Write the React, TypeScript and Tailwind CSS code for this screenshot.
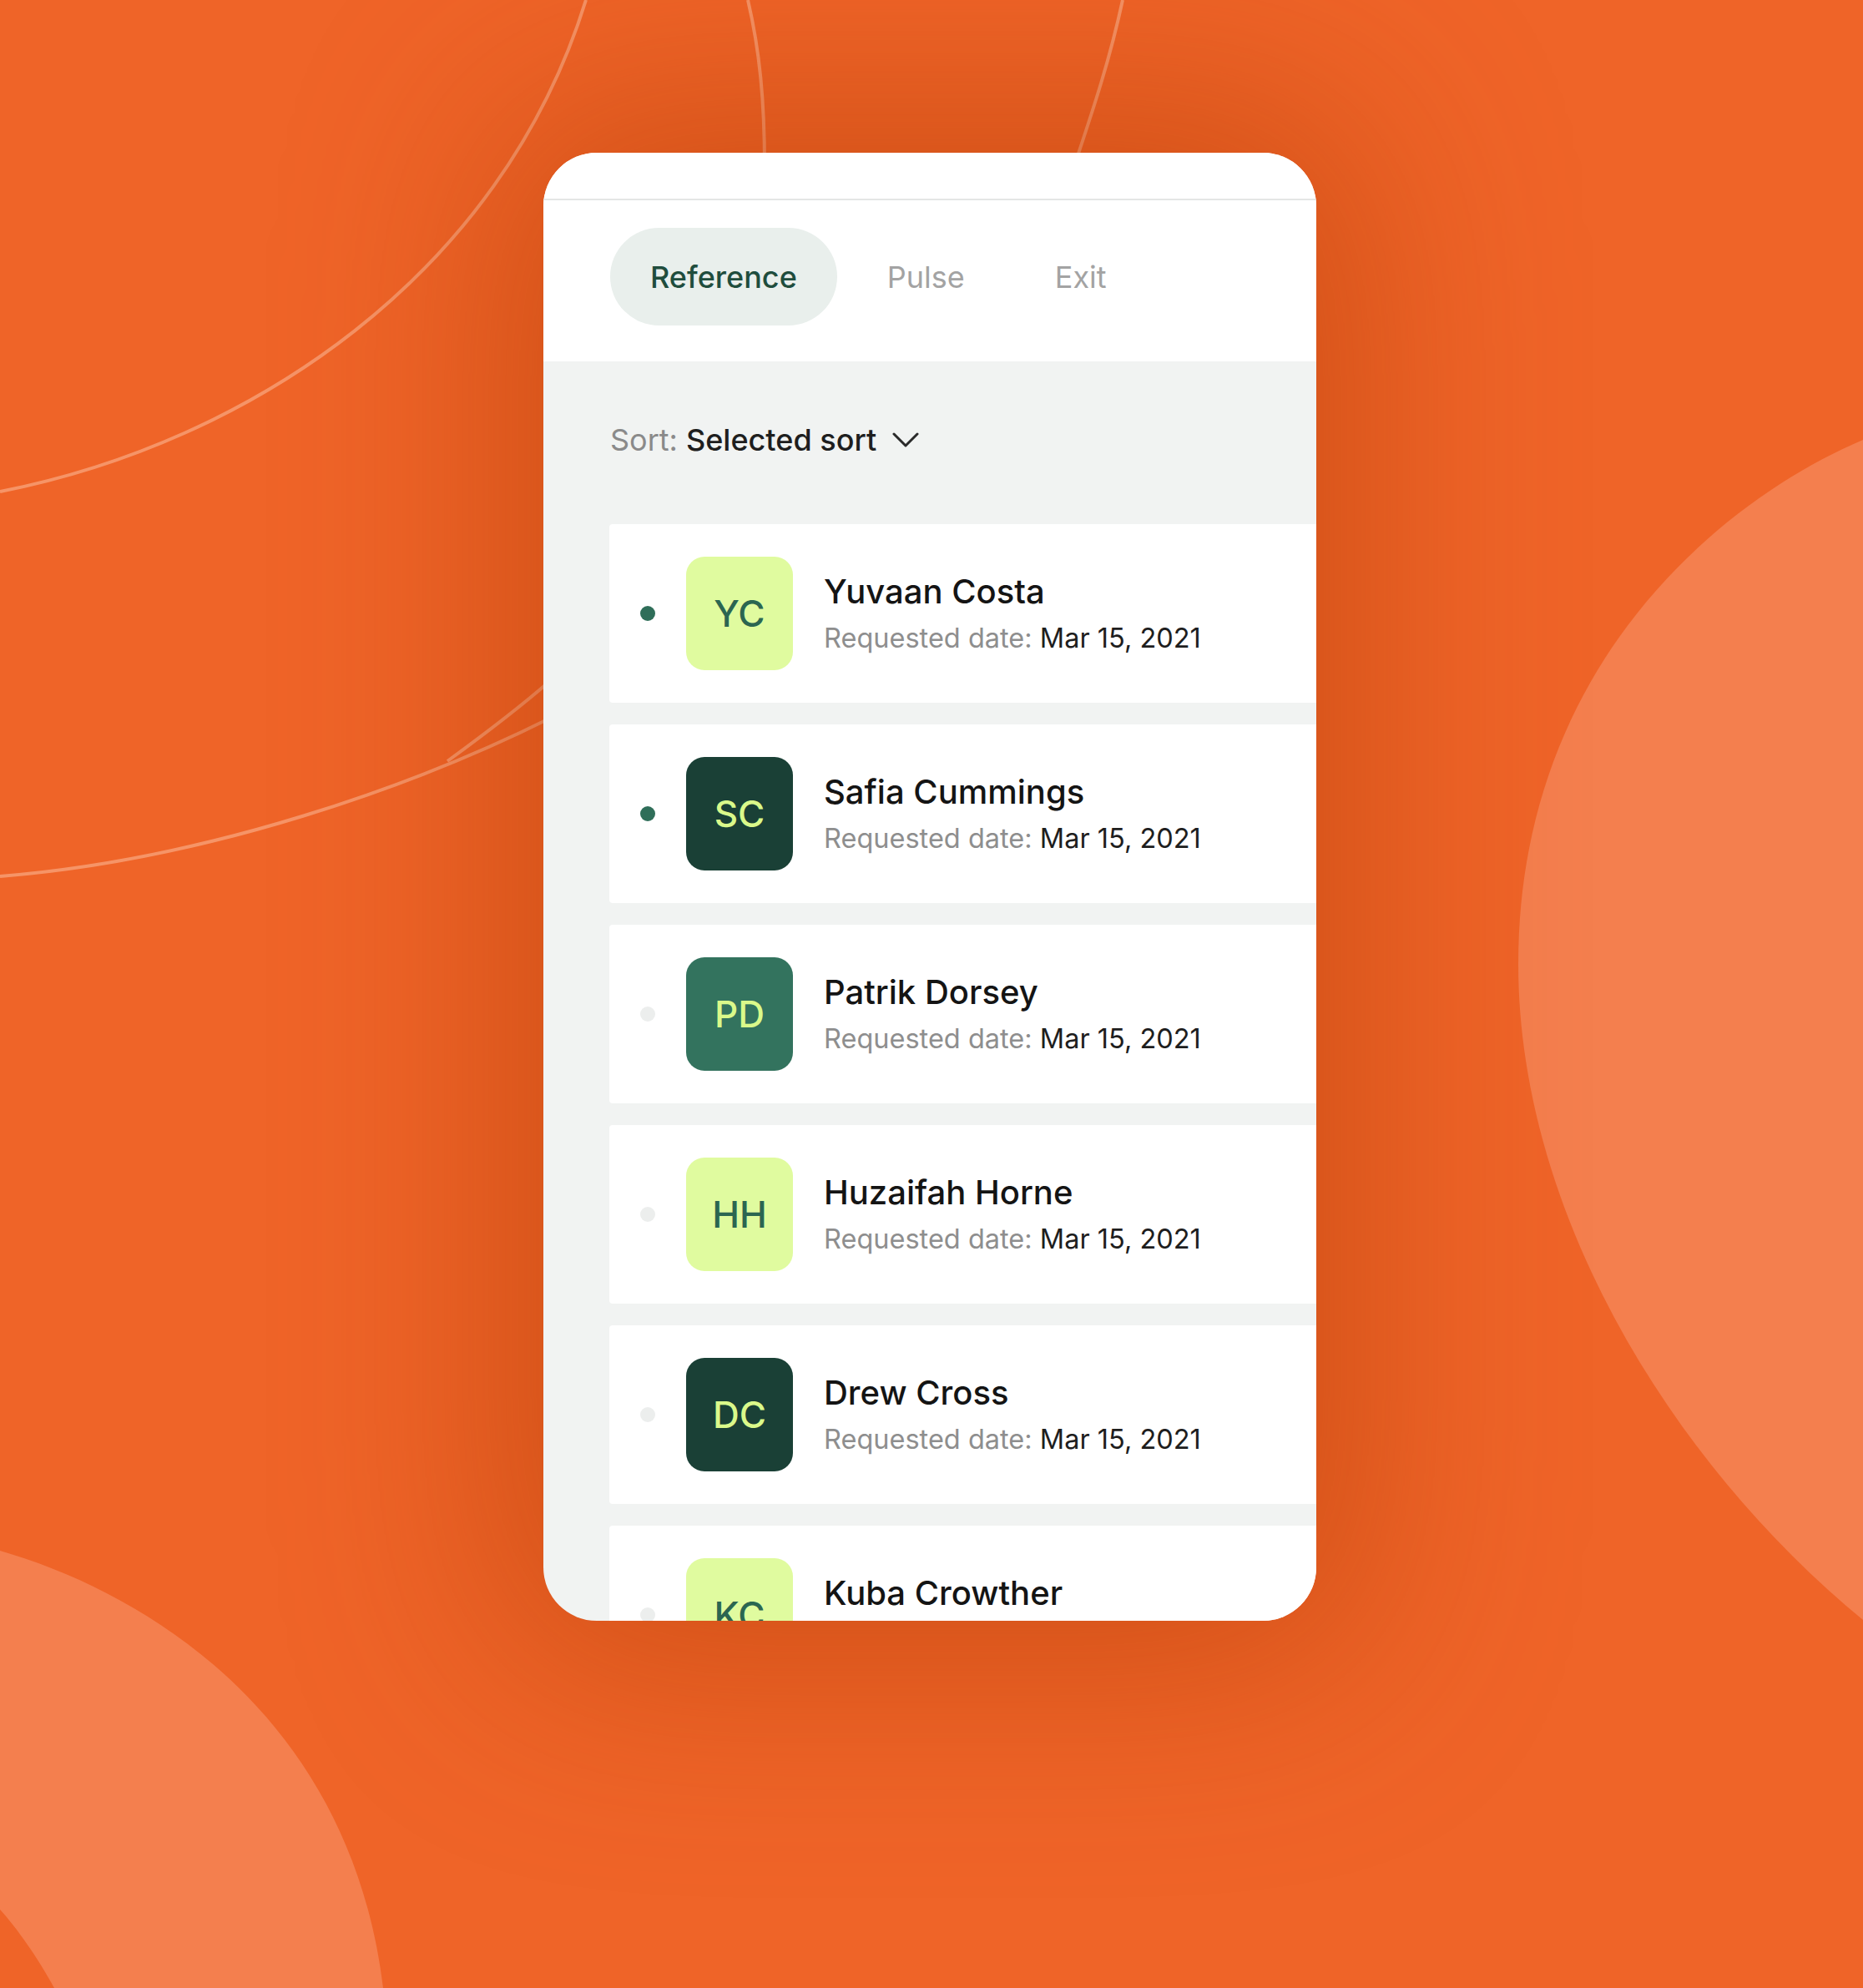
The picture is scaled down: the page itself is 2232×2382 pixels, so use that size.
const people = [
  { initials: "YC", name: "Yuvaan Costa", tone: "lime", active: true },
  { initials: "SC", name: "Safia Cummings", tone: "dark", active: true },
  { initials: "PD", name: "Patrik Dorsey", tone: "mid", active: false },
  { initials: "HH", name: "Huzaifah Horne", tone: "lime", active: false },
  { initials: "DC", name: "Drew Cross", tone: "dark", active: false },
  { initials: "KC", name: "Kuba Crowther", tone: "lime", active: false },
];

const avatarTone: Record<string, string> = {
  lime: "bg-[#E0FB9F] text-[#2B6651]",
  dark: "bg-[#1A4036] text-[#DAF98A]",
  mid: "bg-[#33735E] text-[#DAF98A]",
};

function Backdrop() {
  return (
    <svg
      className="absolute inset-0"
      width="2232"
      height="2382"
      viewBox="0 0 2232 2382"
      fill="none"
    >
      <path
        d="M2232 527 C2060 600 1819 800 1819 1155 C1819 1450 2000 1750 2232 1941 Z"
        fill="#F47F4E"
      />
      <path
        d="M0 1858 C180 1910 420 2060 459 2382 L65 2382 C45 2345 20 2310 0 2288 Z"
        fill="#F47F4E"
      />
      <g stroke="#F7A077" strokeWidth="4" strokeOpacity="0.8">
        <path d="M0 589 C300 530 600 330 702 0" />
        <path d="M896 0 C910 60 916 120 916 200" />
        <path d="M0 1050 C250 1030 500 940 660 860" />
        <path d="M536 912 C580 880 620 850 660 815" />
        <path d="M1345 0 C1330 70 1310 130 1290 190" />
      </g>
    </svg>
  );
}

function Row({ p }: { p: (typeof people)[number] }) {
  return (
    <div className="flex items-center gap-[37px] bg-white rounded-l-[4px] pl-[37px] py-[39px]">
      <div
        className={`w-[18px] h-[18px] rounded-full shrink-0 ${
          p.active ? "bg-[#2F6E59]" : "bg-[#ECEEED]"
        }`}
      />
      <div
        className={`w-[128px] h-[136px] rounded-[22px] shrink-0 flex items-center justify-center text-[44px] font-medium ${avatarTone[p.tone]}`}
      >
        {p.initials}
      </div>
      <div className="flex flex-col">
        <span className="text-[40px] leading-[48px] font-medium text-[#141414]">
          {p.name}
        </span>
        <span className="mt-[12px] text-[32.5px] leading-[40px]">
          <span className="text-[#8E8E8E]">Requested date: </span>
          <span className="text-[#1E1E1E]">Mar 15, 2021</span>
        </span>
      </div>
    </div>
  );
}

export default function App() {
  return (
    <div
      className="relative w-[2232px] h-[2382px] overflow-hidden bg-[#EF6428] pl-[651px] pt-[183px]"
      style={{ fontFamily: "Inter, 'Noto Sans', sans-serif" }}
    >
      <Backdrop />
      <div className="relative z-10 w-[926px] h-[1759px] overflow-hidden rounded-[64px] bg-[#F1F3F2] shadow-[0_0_260px_50px_rgba(170,55,0,0.45)]">
        <div className="bg-white">
          <div className="h-[57px] border-b-2 border-[#E4E6E5]" />
          <div className="flex items-center gap-[12px] pl-[80px] pt-[33px] pb-[43px]">
            <div className="h-[117px] flex items-center px-[48px] rounded-full bg-[#E9EFEC] text-[36px] font-medium text-[#1F4D3D]">
              Reference
            </div>
            <div className="h-[117px] flex items-center px-[48px] text-[36px] text-[#A3A3A3]">
              Pulse
            </div>
            <div className="h-[117px] flex items-center px-[48px] text-[36px] text-[#A3A3A3]">
              Exit
            </div>
          </div>
        </div>

        <div className="pl-[79px] pt-[72px]">
          <div className="flex items-center h-[44px] pl-px text-[36px]">
            <span className="text-[#8A8A8A]">Sort:</span>
            <span className="ml-[10px] font-medium text-[#1E1E1E]">
              Selected sort
            </span>
            <svg
              className="ml-[19px]"
              width="32"
              height="18"
              viewBox="0 0 32 18"
              fill="none"
            >
              <path
                d="M2 2 L16 16 L30 2"
                stroke="#2A2A2A"
                strokeWidth="3"
                strokeLinecap="round"
                strokeLinejoin="round"
              />
            </svg>
          </div>

          <div className="mt-[79px] flex flex-col gap-[26px]">
            {people.map((p) => (
              <Row key={p.initials} p={p} />
            ))}
          </div>
        </div>
      </div>
    </div>
  );
}
